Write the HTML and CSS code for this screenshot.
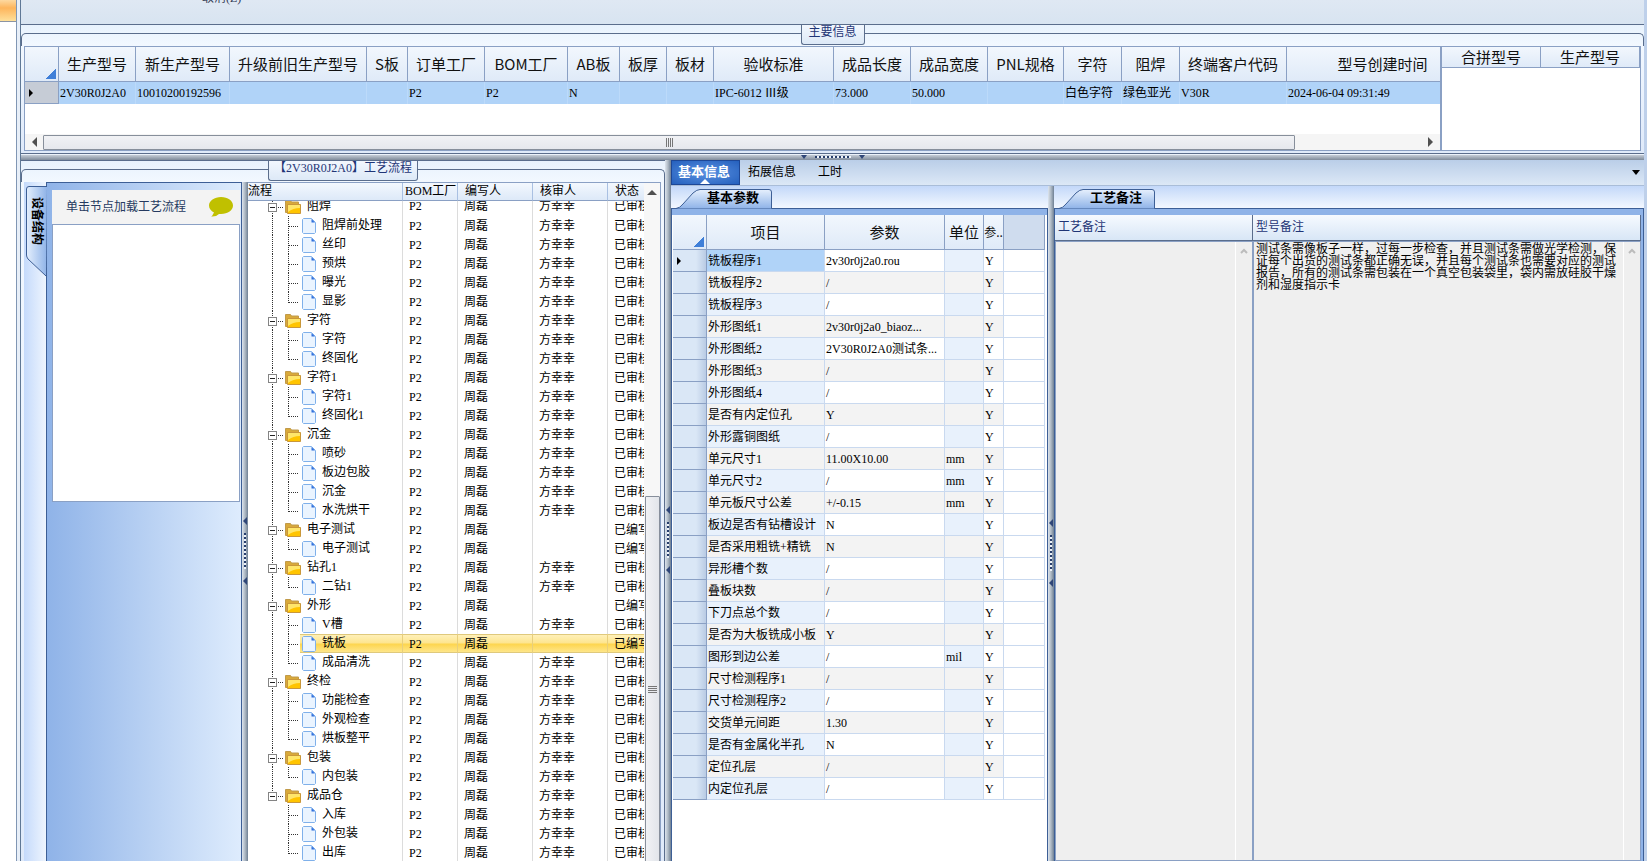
FILE: index.html
```html
<!DOCTYPE html>
<html lang="zh-CN">
<head>
  <meta charset="UTF-8" />
  <title>工艺流程</title>
  <link rel="stylesheet" href="styles.css">
</head>
<body>
  <div class="rail"></div>

  <div class="app">
    <div class="ribbon"><button type="button">取消(Z)</button></div>

    <!-- main info -->
    <section class="group group-main">
      <h2 class="group-title">主要信息</h2>
      <div class="group-body">
        <div class="main-grid">
          <table class="grid model-grid">
            <colgroup id="modelCols"></colgroup>
            <thead><tr id="modelHead"></tr></thead>
            <tbody><tr id="modelRow"></tr></tbody>
          </table>
          <div class="hscroll">
            <i class="tri tri-left"></i>
            <div class="hthumb"><i class="grip-v"></i></div>
            <i class="tri tri-right"></i>
          </div>
        </div>
        <div class="side-grid">
          <table class="grid">
            <thead><tr><th>合拼型号</th><th>生产型号</th></tr></thead>
          </table>
        </div>
      </div>
    </section>

    <div class="split-h">
      <i class="mark-down"></i><i class="dots-h"></i><i class="mark-down"></i>
    </div>

    <div class="lower">
      <!-- process tree -->
      <section class="group group-flow">
        <h2 class="group-title">【2V30R0J2A0】工艺流程</h2>
        <div class="group-body">
          <div class="device">
            <div class="vtab-strip">
              <svg class="vtab-shape" width="22" height="92" viewBox="0 0 22 92">
                <defs>
                  <linearGradient id="vtab"><stop offset="0" stop-color="#e4effd"/><stop offset="1" stop-color="#8fb3e8"/></linearGradient>
                </defs>
                <path d="M22 .5H4Q1.500 .5 1.500 3V69Q1.500 71 3 73L21 90" fill="url(#vtab)" stroke="#3d5f96"/>
              </svg>
              <button type="button" class="vtab">设备结构</button>
            </div>
            <div class="device-page">
              <div class="hint">
                <span>单击节点加载工艺流程</span>
                <svg width="24" height="22" viewBox="0 0 24 22"><path d="M12 1C5.500 1 0 5 0 9.500 0 12.500 2 15 5 16.500L3 20 2 20.500Q7 21 10 18H12C19 18 24 14 24 9.500S19 1 12 1Z" fill="#c0c000"/></svg>
              </div>
              <div class="device-list"></div>
            </div>
          </div>
          <div class="split-v">
            <i class="mark-left"></i><i class="dots-v"></i><i class="mark-left"></i>
          </div>
          <div class="tree-pane">
            <table class="tree">
              <thead>
                <tr><th class="c-name">流程</th><th class="c-plant">BOM工厂</th><th class="c-user">编写人</th><th class="c-user">核审人</th><th>状态</th></tr>
              </thead>
              <tbody id="treeBody"></tbody>
            </table>
          </div>
          <div class="vscroll">
            <i class="tri tri-up"></i>
            <div class="vthumb"><i class="grip-h"></i></div>
          </div>
        </div>
      </section>

      <div class="split-v">
        <i class="mark-left"></i><i class="dots-v"></i><i class="mark-left"></i>
      </div>

      <!-- detail -->
      <section class="detail">
        <nav class="tabs">
          <button type="button" class="tab active">基本信息</button>
          <button type="button" class="tab">拓展信息</button>
          <button type="button" class="tab">工时</button>
          <i class="tab-more"></i>
        </nav>
        <div class="detail-body">
          <div class="pane pane-param">
            <div class="subtabs">
              <svg width="97" height="21" viewBox="0 0 97 21">
                <defs>
                  <linearGradient id="subtab" x2="0" y2="1"><stop offset="0" stop-color="#e6f0fd"/><stop offset="1" stop-color="#8fb3e8"/></linearGradient>
                </defs>
                <path d="M0 20.500Q4 20 7 16L17 5Q21 1.500 24 1.500H93Q95.500 1.500 95.500 4V20.500" fill="url(#subtab)" stroke="#3d5f96"/>
              </svg>
              <button type="button" class="subtab">基本参数</button>
            </div>
            <div class="page">
              <table class="grid param-grid">
                <thead>
                  <tr><th class="corner p-mark"><i></i></th><th class="p-name">项目</th><th class="p-value">参数</th><th class="p-unit">单位</th><th class="p-flag">参..</th><th class="p-rest"></th></tr>
                </thead>
                <tbody id="paramBody"></tbody>
              </table>
            </div>
          </div>

          <div class="split-v">
            <i class="mark-left"></i><i class="dots-v"></i><i class="mark-left"></i>
          </div>

          <div class="pane pane-note">
            <div class="subtabs">
              <svg width="97" height="21" viewBox="0 0 97 21">
                <path d="M0 20.500Q4 20 7 16L17 5Q21 1.500 24 1.500H93Q95.500 1.500 95.500 4V20.500" fill="url(#subtab)" stroke="#3d5f96"/>
              </svg>
              <button type="button" class="subtab">工艺备注</button>
            </div>
            <div class="page notes">
              <div class="note note-craft">
                <label for="craftNote">工艺备注</label>
                <div class="note-box">
                  <textarea id="craftNote"></textarea>
                  <svg width="17" height="16" viewBox="0 0 16 16" preserveAspectRatio="xMidYMin"><path d="M5 11L8 8L11 11" fill="none" stroke="#bcbcbc" stroke-width="2"/></svg>
                </div>
              </div>
              <div class="note note-model">
                <label for="modelNote">型号备注</label>
                <div class="note-box">
                  <textarea id="modelNote">测试条需像板子一样，过每一步检查，并且测试条需做光学检测，保证每个出货的测试条都正确无误，并且每个测试条也需要对应的测试报告，所有的测试条需包装在一个真空包装袋里，袋内需放硅胶干燥剂和湿度指示卡</textarea>
                  <svg width="17" height="16" viewBox="0 0 16 16" preserveAspectRatio="xMidYMin"><path d="M5 11L8 8L11 11" fill="none" stroke="#bcbcbc" stroke-width="2"/></svg>
                </div>
              </div>
            </div>
          </div>
        </div>
      </section>
    </div>
  </div>

  <script>
    // [title, width, value]
    const model = [
      ["", 34, ""],
      ["生产型号", 77, "2V30R0J2A0"],
      ["新生产型号", 94, "10010200192596"],
      ["升级前旧生产型号", 137, ""],
      ["S板", 41, ""],
      ["订单工厂", 77, "P2"],
      ["BOM工厂", 83, "P2"],
      ["AB板", 52, "N"],
      ["板厚", 47, ""],
      ["板材", 47, ""],
      ["验收标准", 120, "IPC-6012 Ⅲ级"],
      ["成品长度", 77, "73.000"],
      ["成品宽度", 77, "50.000"],
      ["PNL规格", 76, ""],
      ["字符", 58, "白色字符"],
      ["阻焊", 58, "绿色亚光"],
      ["终端客户代码", 107, "V30R"],
      ["型号创建时间", 192, "2024-06-04 09:31:49"]
    ];

    document.getElementById("modelCols").innerHTML =
      model.map(c => `<col style="width:${c[1]}px">`).join("");
    document.getElementById("modelHead").innerHTML =
      model.map((c, i) => i ? `<th>${c[0]}</th>` : `<th class="corner"><i></i></th>`).join("");
    document.getElementById("modelRow").innerHTML =
      model.map((c, i) => i ? `<td>${c[2]}</td>` : `<td class="mark"><i></i></td>`).join("");

    const flow = [
      ["阻焊", ["阻焊前处理", "丝印", "预烘", "曝光", "显影"]],
      ["字符", ["字符", "终固化"]],
      ["字符1", ["字符1", "终固化1"]],
      ["沉金", ["喷砂", "板边包胶", "沉金", "水洗烘干"]],
      ["电子测试", ["电子测试"]],
      ["钻孔1", ["二钻1"]],
      ["外形", ["V槽", "铣板", "成品清洗"]],
      ["终检", ["功能检查", "外观检查", "烘板整平"]],
      ["包装", ["内包装"]],
      ["成品仓", ["入库", "外包装", "出库"]]
    ];
    const pending = ["电子测试", "外形", "铣板"];

    const folder = `<svg class="icon" width="16" height="19" viewBox="0 0 16 19">
      <path d="M.5 15.500V3.500H5.500L6.500 5H13.500V15.500Z" fill="#d9a93a" stroke="#c09a4a"/>
      <path d="M2.500 16.500V7.500H15.500V16.500Z" fill="#ffc400" stroke="#c9973a"/>
      <path d="M3 8H15V11Q8 11 3 15Z" fill="#ffe66a"/></svg>`;
    const file = `<svg class="icon" width="14" height="19" viewBox="0 0 14 19">
      <path d="M1.500 2.500H9.500L13.500 6.500V16.500L12.500 17.500H1.500L.5 16.500V3.500Z" fill="#eaf4ff" stroke="#7fb0ea"/>
      <path d="M9.500 3V6.500H13Z" fill="#2f6fdc"/></svg>`;

    function line(x1, y1, x2, y2) {
      return `<path d="M${x1} ${y1}L${x2} ${y2}" stroke="#333" stroke-dasharray="1 1"/>`;
    }

    function treeRow(name, nameCell) {
      const wait = pending.includes(name);
      return `<tr class="${name === "铣板" ? "selected" : ""}">
        <td class="c-name"><div>${nameCell}<span>${name}</span></div></td>
        <td>P2</td><td>周磊</td><td>${wait ? "" : "方幸幸"}</td><td>${wait ? "已编写" : "已审核"}</td></tr>`;
    }

    let rows = "";
    flow.forEach(([name, steps], g) => {
      const lastGroup = g === flow.length - 1;
      rows += treeRow(name, `<button type="button" class="toggle" aria-label="${name}"><svg width="37" height="19" viewBox="0 0 37 19">
        ${line(24.5, 0, 24.5, lastGroup ? 9 : 19)}${line(30, 10.5, 35, 10.5)}
        <rect x="20.500" y="6.500" width="8" height="8" fill="#fff" stroke="#848484"/>
        <path d="M22 10.500H27" stroke="#222"/></svg></button>${folder}`);
      steps.forEach((step, i) => {
        const last = i === steps.length - 1;
        rows += treeRow(step, `<svg class="guide" width="54" height="19" viewBox="0 0 54 19">
          <rect width="52" height="19" fill="#fff"/>
          ${lastGroup ? "" : line(24.5, 0, 24.5, 19)}
          ${line(40.5, 0, 40.5, last ? 11 : 19)}${line(41, 10.5, 51, 10.5)}</svg>${file}`);
      });
    });
    document.getElementById("treeBody").innerHTML = rows;

    const params = [
      ["铣板程序1", "2v30r0j2a0.rou"],
      ["铣板程序2", "/"],
      ["铣板程序3", "/"],
      ["外形图纸1", "2v30r0j2a0_biaoz..."],
      ["外形图纸2", "2V30R0J2A0测试条..."],
      ["外形图纸3", "/"],
      ["外形图纸4", "/"],
      ["是否有内定位孔", "Y"],
      ["外形露铜图纸", "/"],
      ["单元尺寸1", "11.00X10.00", "mm"],
      ["单元尺寸2", "/", "mm"],
      ["单元板尺寸公差", "+/-0.15", "mm"],
      ["板边是否有钻槽设计", "N"],
      ["是否采用粗铣+精铣", "N"],
      ["异形槽个数", "/"],
      ["叠板块数", "/"],
      ["下刀点总个数", "/"],
      ["是否为大板铣成小板", "Y"],
      ["图形到边公差", "/", "mil"],
      ["尺寸检测程序1", "/"],
      ["尺寸检测程序2", "/"],
      ["交货单元间距", "1.30"],
      ["是否有金属化半孔", "N"],
      ["定位孔层", "/"],
      ["内定位孔层", "/"]
    ];
    document.getElementById("paramBody").innerHTML = params.map((p, i) =>
      `<tr><td class="mark">${i ? "" : "<i></i>"}</td><td>${p[0]}</td><td>${p[1]}</td><td>${p[2] || ""}</td><td>Y</td><td></td></tr>`
    ).join("");
  </script>
</body>
</html>
```
FILE: styles.css
```css
* {
  box-sizing: border-box;
}

body {
  display: flex;
  height: 100vh;
  margin: 0;
  overflow: hidden;
  background: #fff;
  color: #000;
  font-family: "Liberation Serif", "Noto Sans CJK SC", serif;
  font-size: 12px;
  line-height: 16px;
}

button {
  padding: 0;
  border: 0;
  background: none;
  color: inherit;
  font: inherit;
}

table {
  border-collapse: separate;
  border-spacing: 0;
  table-layout: fixed;
}

th, td {
  padding: 0;
  overflow: hidden;
  white-space: nowrap;
  text-align: left;
  font-weight: normal;
}

svg {
  display: block;
  flex: none;
}

i {
  flex: none;
}

.rail {
  flex: none;
  width: 16px;
  background: linear-gradient(#fdd9a0, #fdb55c 8px, #fee09a 21px, #8b94a4 21px, #8b94a4 22px, #fff 22px) no-repeat;
}

.app {
  display: flex;
  flex-direction: column;
  flex: 1;
  min-width: 0;
  padding: 0 3px 0 5px;
  background: linear-gradient(to right, #8096b4 1px, #e8eff8 1px, #e8eff8 4px, #5f7896 4px, #5f7896 5px, #bed0ea 5px);
}

.ribbon {
  flex: none;
  height: 24px;
  padding-left: 181px;
  overflow: hidden;
  background: linear-gradient(#dfe8f3, #d8e4f1);
  line-height: 12px;
}

.ribbon button {
  display: block;
  margin-top: -8px;
  color: #333b55;
}

/* group boxes */
.group {
  position: relative;
  display: flex;
  flex-direction: column;
  border-top: 1px solid #5a6d8c;
  background: linear-gradient(#e8f2fd, #f2f8ff 20px, #dfeafa);
}

.group::before {
  content: "";
  flex: none;
  height: 12px;
  margin-top: 8px;
  border: 1px solid #5a6d8c;
  border-bottom: 0;
  border-radius: 5px 5px 0 0;
}

.group-title {
  position: absolute;
  top: 0;
  left: 50%;
  transform: translateX(-50%);
  margin: 0;
  padding: 0 6px;
  border: 1px solid #5a6d8c;
  border-top: 0;
  border-radius: 0 0 3px 3px;
  background: linear-gradient(#f2f7fe, #dde9f7);
  color: #1f3576;
  font-size: 12px;
  font-weight: normal;
  line-height: 14px;
  white-space: nowrap;
}

.group-main {
  flex: none;
  border-bottom: 1px solid #5a6d8c;
}

.group-main .group-title {
  padding: 0 7px 5px;
}

.group-flow .group-title {
  padding: 0 5px 5px;
}

.group-body {
  display: flex;
  flex: 1;
  min-height: 0;
}

.group-main .group-body {
  padding: 0 3px 2px;
}

.group-flow .group-body {
  padding: 0 3px;
  border-right: 1px solid #5a6d8c;
}

/* grids */
.grid th {
  height: 35px;
  border-right: 1px solid #8aa0c4;
  border-bottom: 1px solid #8aa0c4;
  background: linear-gradient(#f2f7fd, #dfeaf8);
  color: #111;
  font-family: "Noto Sans CJK SC", sans-serif;
  font-size: 15px;
  line-height: 20px;
  text-align: center;
}

.corner {
  vertical-align: bottom;
}

.corner i {
  display: block;
  width: 10px;
  height: 11px;
  margin: 0 2px 2px auto;
  background: linear-gradient(135deg, transparent 50%, #3f7fd8 50%);
}

.mark i {
  display: block;
  width: 0;
  margin-left: 3px;
  border: 4px solid transparent;
  border-left-color: #000;
  border-right: 0;
}

.main-grid {
  display: flex;
  flex-direction: column;
  justify-content: space-between;
  flex: 1;
  min-width: 0;
  height: 105px;
  overflow: hidden;
  border: 1px solid #8aa0c4;
  background: #fff;
}

.model-grid {
  width: 1454px;
}

.model-grid td {
  height: 22px;
  padding-left: 1px;
  border-right: 1px solid #bcdafa;
  background: #b0d3f8;
}

.model-grid .mark {
  border-right-color: #8aa0c4;
  border-bottom: 1px solid #8aa0c4;
  background: #c6ccd6;
}

.side-grid {
  flex: none;
  width: 200px;
  border: 1px solid #8aa0c4;
  background: #fff;
}

.side-grid table {
  width: 100%;
}

.side-grid th {
  height: 21px;
}

/* scroll bars */
.hscroll {
  display: flex;
  align-items: center;
  gap: 6px;
  height: 16px;
  padding: 0 7px;
  background: #f5f5f5;
}

.hthumb, .vthumb {
  display: flex;
  align-items: center;
  justify-content: center;
  border: 1px solid #878f9b;
  border-radius: 1px;
}

.hthumb {
  flex: 0 0 1252px;
  height: 15px;
  background: linear-gradient(#f1f2f5, #e6e8ed);
}

.grip-v {
  width: 7px;
  height: 9px;
  background: repeating-linear-gradient(to right, #777 0 1px, transparent 1px 2px);
}

.tri {
  border: 5px solid transparent;
}

.tri-left {
  border-left: 0;
  border-right-color: #505050;
}

.tri-right {
  margin-left: auto;
  border-right: 0;
  border-left-color: #505050;
}

.tri-up {
  border-top: 0;
  border-bottom-color: #505050;
}

.vscroll {
  display: flex;
  flex-direction: column;
  align-items: center;
  gap: 301px;
  flex: none;
  width: 17px;
  padding-top: 7px;
  border-top: 1px solid #8aa0c4;
  border-right: 1px solid #8aa0c4;
  background: #f7f7f7;
}

.vthumb {
  flex: 0 0 386px;
  width: 15px;
  background: linear-gradient(to right, #f1f2f5, #e2e5ea);
}

.grip-h {
  width: 9px;
  height: 7px;
  background: repeating-linear-gradient(#777 0 1px, transparent 1px 2px);
}

/* splitters */
.split-h, .split-v {
  display: flex;
  align-items: center;
  justify-content: center;
  flex: none;
}

.split-h {
  gap: 8px;
  height: 6px;
  background: linear-gradient(#eaf1fa 1px, #c4ccd6 1px, #7f8b9b);
}

.split-v {
  flex-direction: column;
  gap: 8px;
  width: 6px;
  padding-top: 58px;
  background: linear-gradient(to right, #dde5ee, #aeb9c4 3px, #6f8094);
}

.dots-h {
  width: 36px;
  height: 2px;
  background: repeating-linear-gradient(to right, #263d6c 0 2px, #eef3fa 2px 4px);
}

.dots-v {
  width: 2px;
  height: 36px;
  background: repeating-linear-gradient(#263d6c 0 2px, #eef3fa 2px 4px);
}

.mark-down {
  border: 3px solid transparent;
  border-top: 4px solid #2f4678;
  border-bottom: 0;
}

.mark-left {
  border: 4px solid transparent;
  border-right: 4px solid #2f4678;
  border-left: 0;
}

/* process tree */
.lower {
  display: flex;
  flex: 1;
  min-height: 0;
}

.group-flow {
  flex: 0 0 644px;
}

.device {
  display: flex;
  flex: none;
  width: 218px;
}

.vtab-strip {
  position: relative;
  width: 22px;
  padding: 4px 0 0 1px;
  background: linear-gradient(to right, #c5dafb, #eef5fe);
}

.vtab {
  position: absolute;
  top: 15px;
  left: 4px;
  font-size: 12px;
  font-weight: bold;
  line-height: 18px;
  white-space: nowrap;
  writing-mode: vertical-rl;
  text-orientation: sideways;
}

.device-page {
  flex: 1;
  padding: 7px 1px 0 5px;
  border: 1px solid #3d5f96;
  border-bottom: 0;
  background: linear-gradient(to right, #8fb3e8, #deecfd);
}

.hint {
  display: flex;
  align-items: center;
  justify-content: space-between;
  height: 34px;
  padding: 0 7px 0 14px;
  background: #f3f3f3;
  color: #263a60;
}

.device-list {
  height: 278px;
  border: 1px solid #8aa0c4;
  background: #fff;
}

.tree-pane {
  flex: 1;
  min-width: 0;
  overflow: hidden;
  border-top: 1px solid #8aa0c4;
  background: #fff;
}

.tree {
  width: 100%;
}

.tree th {
  height: 18px;
  padding-left: 7px;
  border-right: 1px solid #a9c0e2;
  border-bottom: 1px solid #8aa0c4;
  background: linear-gradient(#f3f8fe, #dde9f8);
  line-height: 17px;
}

.tree th.c-name {
  padding-left: 0;
}

.tree th.c-plant {
  padding-left: 2px;
}

.c-name {
  width: 155px;
}

.c-plant {
  width: 55px;
}

.c-user {
  width: 75px;
}

.tree td {
  height: 19px;
  padding-left: 6px;
  border-right: 1px solid #dcdcdc;
  line-height: 18px;
}

.tree td.c-name {
  padding-left: 0;
}

.tree th:last-child,
.tree td:last-child {
  border-right: 0;
}

.c-name div {
  display: flex;
  height: 19px;
}

.toggle {
  flex: none;
}

.icon {
  margin-right: 6px;
}

/* the list is scrolled, its first row starts under the header */
.tree tbody tr:first-child td {
  height: 15px;
  line-height: 10px;
  vertical-align: top;
}

.tree tbody tr:first-child .c-name div {
  height: 15px;
  align-items: flex-end;
  line-height: 20px;
  overflow: hidden;
}

.tree .selected td {
  border-right-color: #e8cf7c;
  background: linear-gradient(#dfc97c 1px, #fff0b8 1px, #fde58f 9px, #fdd54e 10px, #fee68a 18px, #dfc97c 18px);
}

/* detail */
.detail {
  display: flex;
  flex-direction: column;
  flex: 1;
  min-width: 0;
}

.tabs {
  display: flex;
  align-items: center;
  flex: none;
  height: 26px;
  padding-right: 4px;
  border-bottom: 1px solid #a9bdd8;
  background: linear-gradient(#bacee8, #dce8f6);
}

.tab {
  height: 25px;
  padding: 0 14px 2px 8px;
}

.tab.active {
  position: relative;
  padding: 0 9px 2px 6px;
  border: 1px solid #1d4796;
  background: radial-gradient(#5a92e2, #2560bd);
  color: #fff;
  font-size: 13px;
  font-weight: bold;
}

.tab.active::after {
  content: "";
  position: absolute;
  bottom: 0;
  left: 28px;
  border: 5px solid transparent;
  border-top: 0;
  border-bottom-color: #fff;
}

.tab-more {
  margin-left: auto;
  border: 4px solid transparent;
  border-top: 5px solid #000;
  border-bottom: 0;
}

.detail-body {
  display: flex;
  flex: 1;
  min-height: 0;
}

.pane {
  display: flex;
  flex-direction: column;
}

.pane-param {
  flex: 0 0 377px;
}

.pane-note {
  flex: 1;
  min-width: 0;
}

.subtabs {
  position: relative;
  flex: none;
  height: 22px;
  padding: 2px 0 0 5px;
  background: linear-gradient(#c3d8f9, #f3f8ff);
}

.subtab {
  position: absolute;
  top: 3px;
  left: 36px;
  font-size: 13px;
  font-weight: bold;
  line-height: 18px;
}

.page {
  flex: 1;
  min-height: 0;
  padding: 6px 2px 0 1px;
  border: 1px solid #3d5f96;
  border-bottom: 0;
  background: #8fb3e8;
}

.pane-param .page {
  background: linear-gradient(#8fb3e8 6px, #fff 6px);
}

.param-grid {
  width: 100%;
}

.p-mark {
  width: 34px;
}

.p-name {
  width: 118px;
}

.p-value {
  width: 120px;
}

.p-unit {
  width: 39px;
}

.p-flag {
  width: 20px;
}

.param-grid .p-flag {
  font-size: 12px;
}

.param-grid .p-rest {
  background: #cfdcee;
}

.param-grid td {
  height: 22px;
  padding-left: 1px;
  border-right: 1px solid #c9d9ef;
  border-bottom: 1px solid #c9d9ef;
  background: #fff;
}

.param-grid td:nth-child(2),
.param-grid td:nth-child(4) {
  background: #e8f1fc;
}

.param-grid tr:nth-child(even) td {
  background: #f3f3f3;
}

.param-grid tr td:last-child,
.param-grid tr:nth-child(even) td:last-child {
  background: #fff;
}

.param-grid tr td.mark,
.param-grid tr:nth-child(even) td.mark {
  border-color: #8aa0c4;
  background: linear-gradient(to right, #dae7f6 70%, #b9cbe4);
}

.param-grid tr:first-child td:nth-child(2) {
  background: #b0d3f8;
}

/* notes */
.notes {
  display: flex;
  padding-left: 0;
}

.note {
  display: flex;
  flex-direction: column;
}

.note-craft {
  flex: 0 0 198px;
}

.note-model {
  flex: 1;
  min-width: 0;
}

.note label {
  height: 26px;
  padding-left: 3px;
  border-right: 1px solid #5a6d8c;
  border-bottom: 1px solid #5a6d8c;
  background: linear-gradient(#f6faff, #d8e6f6);
  color: #1f3576;
  line-height: 24px;
}

.note-box {
  display: flex;
  flex: 1;
  border: 1px solid #8aa0c4;
  background: #efefef;
}

.note-box svg {
  height: 100%;
  border-left: 1px solid #fff;
}

textarea {
  flex: 1;
  min-width: 0;
  padding: 1px 0 0 2px;
  border: 0;
  outline: 0;
  background: none;
  color: #000;
  font: inherit;
  line-height: 12px;
  resize: none;
  overflow: hidden;
}
```
